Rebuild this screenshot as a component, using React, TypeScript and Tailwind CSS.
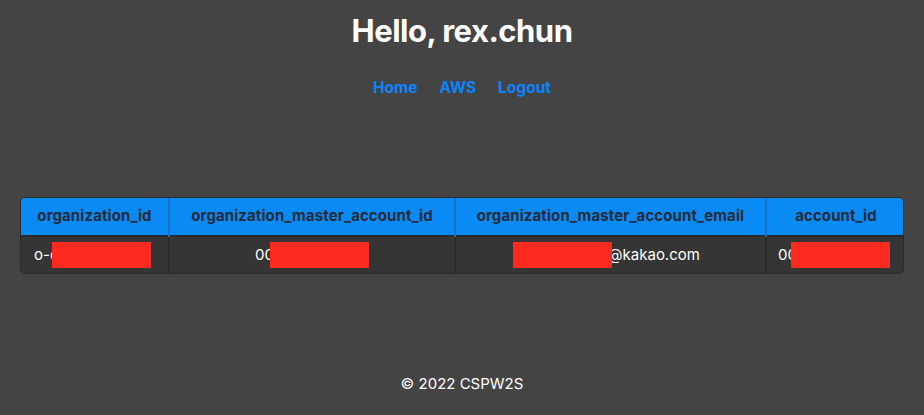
const Redacted = ({ w, ml = 0 }: { w: number; ml?: number }) => (
  <span
    className="relative inline-block h-[26px] bg-[#ff2a1f] align-middle"
    style={{ width: w, marginLeft: ml }}
  />
);

const App = () => {
  const headers = [
    { label: "organization_id", w: "w-[148px]" },
    { label: "organization_master_account_id", w: "w-[286px]" },
    { label: "organization_master_account_email", w: "w-[311px]" },
    { label: "account_id", w: "w-[139px]" },
  ];
  return (
    <div className="flex min-h-[415px] w-full flex-col items-center bg-[#444444] font-['Inter',sans-serif] text-white">
      <h1 className="mt-[12px] text-[31px] font-bold leading-[38px] tracking-[-0.5px]">Hello, rex.chun</h1>
      <nav className="mt-[29px] flex gap-[22px] text-[15.5px] font-bold leading-[18px] text-[#0a84ff]">
        <a href="#">Home</a>
        <a href="#">AWS</a>
        <a href="#">Logout</a>
      </nav>
      <div className="mt-[100px] w-[884px] overflow-hidden rounded-[5px] border border-[#2c2c2c]">
        <table className="w-full table-fixed border-collapse text-[15px]">
          <thead>
            <tr className="bg-[#0a8af5] text-[#262b35]">
              {headers.map((h, i) => (
                <th
                  key={h.label}
                  className={`${h.w} h-[38px] px-[10px] font-bold tracking-[0.1px] ${i > 0 ? "border-l-2 border-[#1a6fc0]" : ""}`}
                >
                  {h.label}
                </th>
              ))}
            </tr>
          </thead>
          <tbody>
            <tr className="bg-[#353535]">
              <td className="h-[37px] border-t-2 border-[#2a2a2a] pl-[13px] text-left whitespace-nowrap">
                <span className="align-middle">o-o</span>
                <Redacted w={99} ml={-7} />
              </td>
              <td className="border-l-2 border-t-2 border-[#2a2a2a] text-center whitespace-nowrap">
                <span className="align-middle">00</span>
                <Redacted w={99} ml={-4} />
              </td>
              <td className="border-l-2 border-t-2 border-[#2a2a2a] pr-[8px] text-center whitespace-nowrap">
                <Redacted w={99} />
                <span className="-ml-[4px] align-middle">@kakao.com</span>
              </td>
              <td className="border-l-2 border-t-2 border-[#2a2a2a] pl-[11px] text-left whitespace-nowrap">
                <span className="align-middle">00</span>
                <Redacted w={99} ml={-6} />
              </td>
            </tr>
          </tbody>
        </table>
      </div>
      <footer className="mt-auto mb-[20px] text-[15px]">© 2022 CSPW2S</footer>
    </div>
  );
};

export default App;
